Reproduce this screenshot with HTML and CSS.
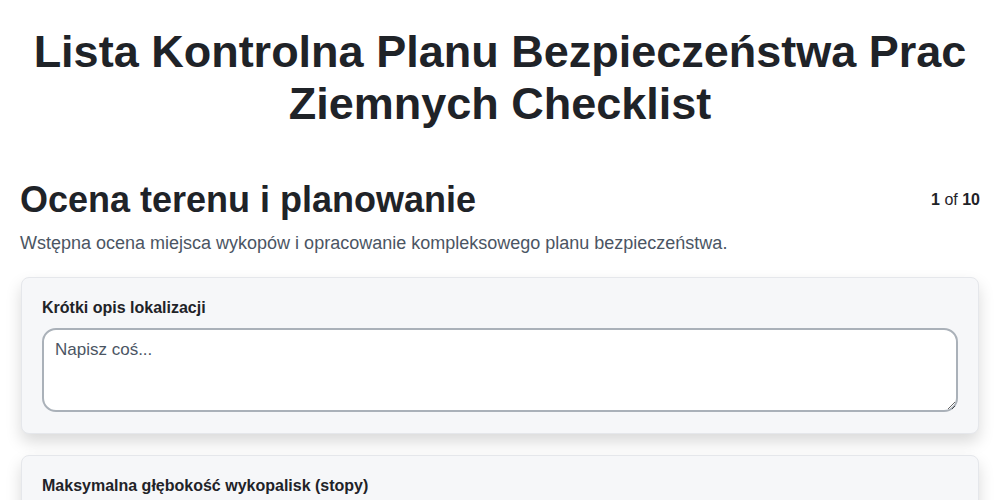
FILE: index.html
```html
<!DOCTYPE html>
<html lang="pl">
<head>
<meta charset="UTF-8" />
<meta name="viewport" content="width=device-width, initial-scale=1.0"/>
<title>Lista Kontrolna Planu Bezpieczeństwa Prac Ziemnych Checklist</title>
<link rel="stylesheet" href="styles.css">
</head>
<body>

<div class="page">
    <h1 class="title">Lista Kontrolna Planu Bezpieczeństwa Prac Ziemnych Checklist</h1>

    <div class="section-head">
        <h2>Ocena terenu i planowanie</h2>
        <span class="counter"><b>1</b> of <b>10</b></span>
    </div>
    <p class="section-desc">Wstępna ocena miejsca wykopów i opracowanie kompleksowego planu bezpieczeństwa.</p>

    <!-- pytanie 1 -->
    <div class="card">
        <label class="field-label" for="q1">Krótki opis lokalizacji</label>
        <textarea id="q1" class="field-input" placeholder="Napisz coś..."></textarea>
    </div>

    <!-- pytanie 2 -->
    <div class="card">
        <label class="field-label" for="q2">Maksymalna głębokość wykopalisk (stopy)</label>
        <textarea id="q2" class="field-input" placeholder="Napisz coś..."></textarea>
    </div>
</div>

</body>
</html>
```

FILE: styles.css
```css
body {
    font-family: "Liberation Sans", Arial, sans-serif;
    background: #ffffff;
    color: #1f2328;
    margin: 0;
    padding: 0;
}

.page {
    padding: 0 20px;
}

.title {
    font-size: 45px;
    line-height: 52px;
    font-weight: bold;
    text-align: center;
    margin: 26px 0 50px;
}

.section-head {
    display: flex;
    justify-content: space-between;
    align-items: flex-start;
}

.section-head h2 {
    font-size: 36px;
    line-height: 40px;
    margin: 0;
}

.counter {
    font-size: 16px;
    margin-top: 11px;
}

.section-desc {
    font-size: 18px;
    color: #4b5563;
    margin: 13px 0 23px;
}

.card {
    background: #f6f7f9;
    border: 1px solid #e5e7eb;
    border-radius: 8px;
    padding: 21px 20px 21px;
    margin: 0 1px 21px;
    box-shadow: 0 8px 16px rgba(0, 0, 0, 0.15);
}

.field-label {
    display: block;
    font-size: 16px;
    font-weight: bold;
    margin: 0 0 11px;
}

.field-input {
    display: block;
    width: 100%;
    height: 84px;
    box-sizing: border-box;
    border: 2px solid #aab1b9;
    border-radius: 14px;
    padding: 10px 11px;
    font-family: "Liberation Sans", Arial, sans-serif;
    font-size: 17px;
    background: #ffffff;
}

.field-input::placeholder {
    color: #4b5563;
}
```
